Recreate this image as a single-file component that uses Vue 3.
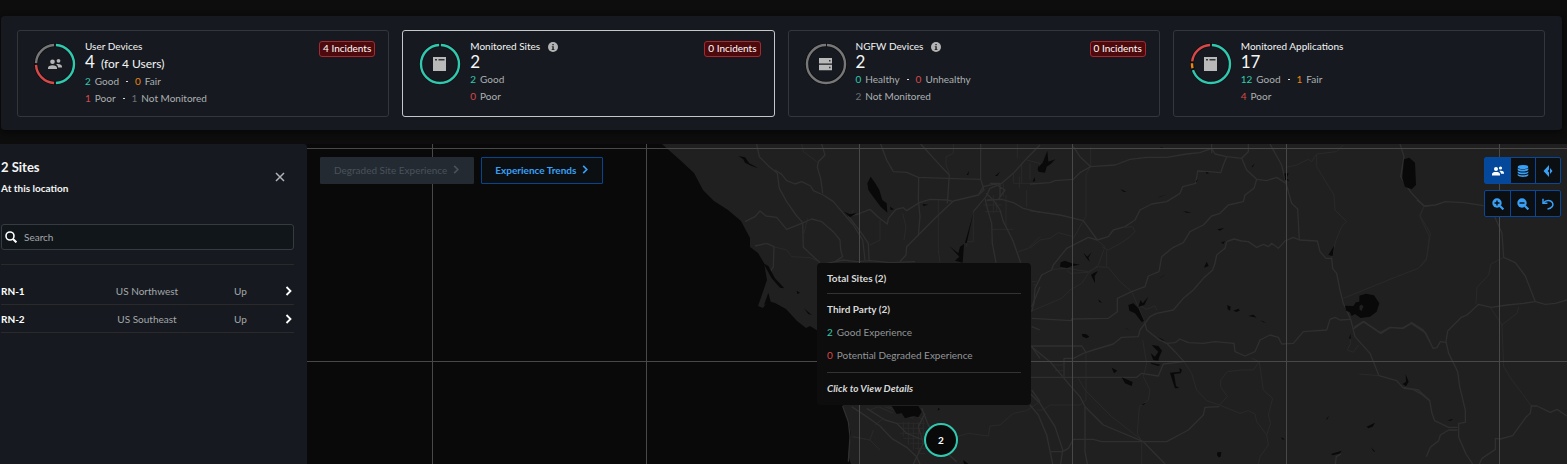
<script setup>
import { ref } from 'vue'

const teal = '#30c9b0'
const red = '#d94848'
const orange = '#ee8511'
const gray = '#777777'

const cards = [
  {
    title: 'User Devices', value: '4', note: '(for 4 Users)', incidents: '4 Incidents', icon: 'users',
    arcs: [[0, 50, teal], [50, 25, red], [75, 25, gray]],
    rows: [
      [{ n: 2, label: 'Good', tone: 'good' }, { n: 0, label: 'Fair', tone: 'fair' }],
      [{ n: 1, label: 'Poor', tone: 'poor' }, { n: 1, label: 'Not Monitored', tone: 'none' }]
    ]
  },
  {
    title: 'Monitored Sites', value: '2', info: true, incidents: '0 Incidents', icon: 'window', active: true,
    arcs: [[0, 100, teal]],
    rows: [[{ n: 2, label: 'Good', tone: 'good' }], [{ n: 0, label: 'Poor', tone: 'poor' }]]
  },
  {
    title: 'NGFW Devices', value: '2', info: true, incidents: '0 Incidents', icon: 'server',
    arcs: [[0, 102, gray]],
    rows: [
      [{ n: 0, label: 'Healthy', tone: 'good' }, { n: 0, label: 'Unhealthy', tone: 'poor' }],
      [{ n: 2, label: 'Not Monitored', tone: 'none' }]
    ]
  },
  {
    title: 'Monitored Applications', value: '17', icon: 'window',
    arcs: [[0, 70.6, teal], [70.6, 5.9, orange], [76.5, 23.5, red]],
    rows: [
      [{ n: 12, label: 'Good', tone: 'good' }, { n: 1, label: 'Fair', tone: 'fair' }],
      [{ n: 4, label: 'Poor', tone: 'poor' }]
    ]
  }
]

const sites = [
  { name: 'RN-1', region: 'US Northwest', status: 'Up' },
  { name: 'RN-2', region: 'US Southeast', status: 'Up' }
]
const query = ref('')

const westRoads = [
  'M350 12L358 50L388 80L412 100L418 145L440 185L468 225L488 248L490 322L540 368',
  'M405 90L425 103L440 122L465 132L485 125L512 138L520 152L550 165L580 185L610 220L640 255L668 300L675 360',
  'M545 12L555 45L535 65L532 82L542 115L548 160',
  'M722 12L740 60L760 95L800 97L835 112L920 115L1022 118',
  'M842 12L895 70L928 105L922 190',
  'M836 110L835 180L840 230L835 288',
  'M1022 12V118L1032 150L1015 165L940 183L885 235L835 285L800 320L798 345L780 365',
  'M940 185L922 180L870 178L838 188L800 212L790 203L768 208L745 235L742 252L715 232L690 208L655 222L625 228',
  'M625 228L665 280L685 310L687 360',
  'M1200 15L1165 50L1120 100L1085 130L1050 145L1038 170L1000 215',
  'M1038 160L1060 180L1080 210L1090 245L1118 300L1142 368',
  'M1035 175L1042 205L1055 250L1057 310L1068 368',
  'M1040 180L1085 178L1120 188L1150 205L1200 217',
  'M1050 130H1080V175M1015 165L1030 140L1065 132L1095 150L1075 178L1040 182',
  'M315 245L345 230L360 213L378 228L410 232L440 268L485 250L515 237L545 245L580 275L600 300L602 330L608 350L585 365',
  'M345 318L380 310L402 320L400 380L388 400',
  'M560 370L610 360L650 365L690 362L750 368L825 365',
  'M608 798L625 845L630 890L625 965',
  'M635 800L680 830L720 858L755 895L800 922L830 950L840 972',
  'M680 805L735 840L770 850L800 880L850 900',
  'M845 805L865 855L890 890L900 920L950 965',
  'M820 972L850 910L835 860L855 820',
  'M1175 560L1200 570M1175 620L1200 655M1175 750L1200 785M1175 500L1200 440'
]
const westMinor = [
  'M485 12L490 35L530 65M940 12V40L918 50V75L928 100M1132 12V55M1160 60L1200 70V95',
  'M503 235L492 280M400 320L440 330L455 350L510 353L540 365M788 220L798 260L792 300',
  'M895 180V330L900 368M1098 165V265M1200 290L1165 325L1135 335',
  'M1030 195H1085M1035 215H1085M1060 165V220M1070 185V215M1000 215V305H980V320M1055 268H1120',
  'M1120 100V130H1190M1145 70V130M1090 130V170M1138 110V145M1160 150V200M1170 70V120',
  'M630 230L640 210M720 240V300L690 315',
  'M770 850H855M785 865H850M780 880H855M790 895H855M810 910H855M825 925H860M835 940H855',
  'M790 845V890M805 845V915M820 848V930M835 845V940M850 840V915',
  'M690 810L715 800L760 820M730 835L705 855M700 870L690 900L635 890',
  'M950 890L985 880L1045 888L1050 858L1080 855L1120 820L1160 812L1200 785',
  'M640 890L690 900L720 930M900 940L945 910',
  'M735 800L820 835M745 800L825 828M755 800L850 838'
]
const eastRoads = [
  'M0 132L60 128L75 122L130 118L150 98L182 80L255 75L300 58L350 52L410 52L470 42L510 38L545 25L555 42L590 50L635 55L655 35V12',
  'M182 80L150 50L130 20M545 12V40M590 50L580 75L572 98L538 95L503 93L497 130L458 140L450 160L410 185L365 192L330 210L315 240L285 260L250 270L235 290L202 300L160 242L90 225L0 212',
  'M202 300L175 292L110 325L70 375L65 390L35 405L15 445L12 490L5 515',
  'M635 55L650 90L680 118L672 145L645 165L640 185L595 195L570 220L545 228L520 255L480 275L460 308L430 322L395 350L387 395L355 408L345 440L305 455L262 475V515L235 535L125 537L125 542L5 535',
  'M680 118L710 122L740 112L768 130M720 12L755 75L768 130L785 190L803 207L808 300',
  'M345 550L350 570L385 598L410 610L435 635L462 665L400 672L385 708L335 700L320 712H0',
  'M590 305L612 297L635 303L655 305L680 322L700 313L715 320L725 310L745 325L765 303L790 292L808 300L862 303L870 335L888 355L905 355L908 385L920 400L930 450L940 490L962 538L975 590L1020 640L1047 707L1100 722L1118 742L1165 750L1200 782',
  'M590 305L585 325L560 345L555 370L548 390L520 415L490 450L460 475L430 510L380 520L360 530L345 550L330 570L325 590L275 592L250 612L230 618L190 630L160 640L130 655L102 655V710',
  'M410 610L435 608L450 597L475 608L520 610L555 605L612 610L615 635L645 648L675 635L690 600L720 585L745 592L755 612L790 610L820 575L890 570L900 538L915 532L930 540L962 538',
  'M972 562L1000 545L1050 578L1080 562L1120 565L1145 548L1180 570L1200 605',
  'M0 618H155L168 637M5 620L60 665L125 742L150 770L165 800L220 855L340 905L405 972',
  'M0 760L30 790L75 860L90 905L100 935M0 795L25 825L50 885L68 972',
  'M165 800V935L172 972M62 935H98L115 925L130 898H190L215 905H410L475 870L520 825L525 802L568 800',
  'M92 972L98 930M1110 12L1122 50L1112 110L1145 160L1182 198L1200 197'
]
const eastMinor = [
  'M182 20V80L168 102V230L160 242L130 295M215 320L235 330L275 308L300 290L315 275L308 260L285 262',
  'M70 388L110 385L175 395L205 380L235 382L270 425L305 455L325 500L345 550',
  'M195 295L225 320L205 375L175 400L155 430L120 450L95 475L0 515M230 330V380M110 390L120 400L175 397',
  'M10 435H20M5 425L20 425M70 675H100M75 692H100M20 810H40',
  'M768 82L800 75L835 58L845 65L860 42L920 35L940 15M860 45V80L912 165L915 210L950 245L935 260L918 300L905 355',
  'M940 475L1100 410L1165 385L1190 355L1198 290L1170 230L1182 198',
  'M462 665L485 700L500 750L530 782L568 795L592 770L572 740V720L592 695L635 690L670 690L688 665L665 655M688 665L700 750L728 775L715 825L722 850L710 885L680 845L675 822L655 812L630 820L568 795M710 885L715 915L690 950L685 972',
  'M338 600L350 670L340 710L360 750L355 780L328 800L322 880L335 905V972M145 715L165 750L245 830L335 900M168 640V780L150 795H60L40 810M325 495L350 508L375 497L380 510',
  'M988 702L1047 707M960 590L962 610L952 630L970 637L985 615M0 325L30 300L60 295L85 278L130 290'
]
const farRoads = [
  'M450 0L472 18L505 15L535 5L590 8L650 17M683 50L705 100L710 172L745 188L775 228L805 305L770 310L720 315L672 322L635 313L600 345L583 352L542 393L537 425L545 460L572 515L578 560L595 630V667L575 670V712L597 762L617 792',
  'M805 305L835 313L865 310L900 300M258 388L290 365L342 400L370 382L405 385L433 370L475 398L498 445L510 443L520 425L537 427',
  'M410 565L438 568L460 580L488 602L495 640L503 662L545 682H572M572 690L545 690L520 705L515 722L490 742L478 770',
  'M637 792L645 775L685 748V715L700 717L737 707L778 650L790 640L793 618H810L850 637L870 628L900 648M205 792L208 770L222 762'
]
const farMinor = [
  'M472 18L458 45L490 100L478 180L460 200',
  'M710 172L672 192L665 225L630 262L627 312M670 322L705 375L750 340L755 320M705 375L710 500L735 540L765 580L793 618'
]
</script>

<template>
  <div class="page">
    <section class="summary">
      <article v-for="card in cards" :key="card.title" class="card" :class="{ active: card.active }">
        <svg class="ring" viewBox="0 0 42 42" aria-hidden="true">
          <circle cx="21" cy="21" r="19" fill="none" stroke="#0d0f11" stroke-width="4" />
          <circle
            v-for="(arc, i) in card.arcs" :key="i" cx="21" cy="21" r="19" fill="none"
            :stroke="arc[2]" stroke-width="2.4" pathLength="100"
            :stroke-dasharray="`${arc[1] - 1.6} 200`" :stroke-dashoffset="-(arc[0] + 0.8)"
            transform="rotate(-90 21 21)"
          />
          <g v-if="card.icon === 'users'" fill="#b4b4b4">
            <circle cx="18.5" cy="18.8" r="2.3" />
            <circle cx="24.5" cy="17.8" r="1.9" />
            <path d="M14 26v-1c0-2 2-2.8 4.5-2.8S23 23 23 25v1zM22 21.2c3-.7 6 .2 6 2.5v.7h-4c0-1.600-.8-2.500-2-3.200z" />
          </g>
          <g v-else-if="card.icon === 'window'">
            <path fill="#b9b9b9" d="M14 14h13v14H14z" />
            <path fill="#34373b" d="M16 16h2v1.500h-2zM19.500 16h6v1.500h-6z" />
          </g>
          <g v-else>
            <path fill="#b9b9b9" d="M14 15h13v5.500H14zM14 21.800h13v5.500H14z" />
            <path fill="#34373b" d="M24 17h1.500v1.500H24zM24 23.800h1.500v1.500H24z" />
          </g>
        </svg>
        <div class="info">
          <h2>
            {{ card.title }}
            <svg v-if="card.info" class="tip" viewBox="0 0 10 10" aria-hidden="true">
              <circle cx="5" cy="5" r="5" fill="#b4b4b4" />
              <path d="M4.300 2h1.500v1.300H4.300zM3.800 4.200h2v2.700h.6v1H3.700v-1h.6V5.100h-.5z" fill="#252a30" />
            </svg>
          </h2>
          <p class="value" :class="{ noted: card.note }">{{ card.value }}<span v-if="card.note">{{ card.note }}</span></p>
          <p v-for="(row, r) in card.rows" :key="r" class="stats">
            <template v-for="(s, i) in row" :key="s.label">
              <i v-if="i" class="dot"></i>
              <span><b :class="s.tone">{{ s.n }}</b>{{ s.label }}</span>
            </template>
          </p>
        </div>
        <span v-if="card.incidents" class="badge">{{ card.incidents }}</span>
      </article>
    </section>

    <main class="body">
      <aside class="panel">
        <header>
          <div>
            <h1>2 Sites</h1>
            <p>At this location</p>
          </div>
          <button class="close" aria-label="Close">
            <svg viewBox="0 0 10 10"><path d="M1 1l8 8M9 1L1 9" fill="none" stroke="#b0b4b8" stroke-width="1.500" /></svg>
          </button>
        </header>
        <label class="search">
          <svg viewBox="0 0 12 12" aria-hidden="true">
            <circle cx="5" cy="5" r="4" fill="none" stroke="#fff" stroke-width="1.600" />
            <path d="M8 8l3.400 3.400" stroke="#fff" stroke-width="2" />
          </svg>
          <input v-model="query" type="text" placeholder="Search" aria-label="Search" />
        </label>
        <table>
          <tbody>
            <tr v-for="site in sites" :key="site.name">
              <th scope="row">{{ site.name }}</th>
              <td class="region">{{ site.region }}</td>
              <td class="status">{{ site.status }}</td>
              <td class="go">
                <button :aria-label="`Open ${site.name}`">
                  <svg viewBox="0 0 6 10"><path d="M1 1l4 4-4 4" fill="none" stroke="#fff" stroke-width="1.800" /></svg>
                </button>
              </td>
            </tr>
          </tbody>
        </table>
      </aside>

      <section class="map">
        <svg class="terrain" viewBox="307 144 1260 320" preserveAspectRatio="xMinYMin slice" aria-hidden="true">
          <path
            fill="#202020"
            d="M662 144L680 160L694 173L703 190L714 201L728 210L741 221L750 238L750 247L758 253L764 263L767 280L758 306L763 308L768 301L775 303L786 309L797 321L806 328L810 326L818 331L830 370L843 406L848 420L851 435L848 455L851 464H1567V144Z"
          />
          <g fill="none" stroke-linejoin="round">
            <g transform="translate(640 140) scale(.33333)">
              <path v-for="d in westMinor" :key="d" :d="d" class="minor" />
              <path v-for="d in westRoads" :key="d" :d="d" class="road" />
            </g>
            <g transform="translate(1030 140) scale(.33333)">
              <path v-for="d in eastMinor" :key="d" :d="d" class="minor" />
              <path v-for="d in eastRoads" :key="d" :d="d" class="road" />
            </g>
            <g transform="translate(1267 200) scale(.33333)">
              <path v-for="d in farMinor" :key="d" :d="d" class="minor" />
              <path v-for="d in farRoads" :key="d" :d="d" class="road" />
            </g>
          </g>
          <g fill="#090909">
            <g transform="translate(640 140) scale(.33333)">
              <path d="M295 48L315 52L328 70L355 85L335 78L315 68L310 58ZM692 110L705 128L718 150L727 180L740 190L742 218L722 200L705 178L685 150L682 130ZM370 370L385 378L405 415L433 445L420 443L395 415ZM385 458L392 485L372 495ZM960 320L972 312L968 368L945 362L958 350L928 318L955 340ZM1000 220L980 310L975 308ZM755 798L770 822L785 820L795 835L820 828L835 832L845 815L835 798ZM612 215L630 232L650 220L628 222ZM750 200L762 208L752 210ZM848 192L865 194L850 198ZM470 452L480 458L472 462ZM492 505L515 525L505 522ZM895 803L900 808L893 812ZM970 960L985 972H972ZM1195 75L1200 95L1193 90ZM1065 108L1080 95L1072 108ZM980 105L987 93L985 105ZM1183 112L1186 122L1178 126Z" />
            </g>
            <g transform="translate(1030 140) scale(.33333)">
              <path d="M52 32L55 65L76 58L62 72L50 80L45 98L25 95L28 78L38 68ZM92 367L105 362L125 370L150 374L125 378L112 384L90 380ZM160 338L172 350L185 337L175 353L180 366L170 355ZM204 393L194 408L195 430L183 405L190 400ZM295 495L310 490L325 505L342 543L335 546L315 520L298 512ZM355 470L343 495L325 500L332 480L338 490ZM155 582L168 582L178 590L170 595L158 590ZM283 562L302 572L290 566ZM365 615L385 618L396 632L388 650L385 662L370 660L362 640L375 650L385 635ZM362 668L392 674L385 678L365 672ZM245 683L262 692L252 700ZM275 712L308 726L305 738L285 730ZM420 698L450 695L448 683L456 690L452 700L432 702L438 738L448 744L435 745L425 715ZM562 268L582 264L570 272ZM573 308L585 303L580 312ZM530 365L536 378L522 383ZM592 495L602 500L600 512L593 508ZM610 512L625 506L630 511L620 516ZM655 528L670 524L680 533L668 530ZM690 540L708 548L700 547ZM1122 58L1138 53L1155 68L1158 135L1145 148L1125 140L1117 115ZM912 318L908 348L895 345ZM945 497L970 498L978 487L988 485L988 467L1008 461L1032 466L1048 490L1040 515L1020 530L992 534L975 522L965 528L960 517L948 512ZM962 582V598L957 595ZM1127 703L1136 725L1128 739L1118 732L1128 725ZM1010 860L1035 848L1028 860L1015 865ZM903 942L935 932L930 940L908 946ZM1023 922L1036 935L1030 934ZM562 937L574 936L572 950L566 952L561 945ZM753 892L765 898L758 899ZM763 100L776 100L770 115L778 123L765 120ZM527 95L538 99L530 101ZM497 125L504 116L500 126ZM458 214L485 217L470 218ZM385 172L410 163L390 171ZM272 148L290 155L280 155ZM388 415L408 402L392 413ZM665 80L674 70L668 82ZM205 478L216 488L208 486ZM335 793L348 788L340 795ZM385 592L405 602L395 600ZM390 20L408 27H398ZM888 838L897 827L892 838Z" />
            </g>
            <path d="M1447.500 420.200L1453 419L1451 420.800Z" />
          </g>
          <path d="M1359.500 306l2-1.500 2 2-2 4.500-2-1.500z" fill="#202020" />
          <path d="M307 148.500H1567M307 361.500H1567M432.500 144V464M646.500 144V464M859.500 144V464M1072.500 144V464M1286.500 144V464M1499.500 144V464" stroke="#484848" />
        </svg>

        <div class="actions">
          <button class="action" disabled>
            Degraded Site Experience
            <svg viewBox="0 0 6 10"><path d="M1 1l4 4-4 4" fill="none" stroke="currentColor" stroke-width="1.800" /></svg>
          </button>
          <button class="action primary">
            Experience Trends
            <svg viewBox="0 0 6 10"><path d="M1 1l4 4-4 4" fill="none" stroke="currentColor" stroke-width="1.800" /></svg>
          </button>
        </div>

        <div class="tools">
          <div class="group">
            <button class="on" aria-label="Users">
              <svg viewBox="0 0 12 12" fill="#fff">
                <circle cx="4" cy="4" r="2" /><circle cx="8.500" cy="3" r="1.600" />
                <path d="M0 10.500V9.300C0 7.600 1.700 7 4 7s4 .6 4 2.300v1.200zM7.200 6c2.400-.5 4.800 0 4.800 2v.8H9C8.900 7.500 8.300 6.700 7.200 6z" />
              </svg>
            </button>
            <button aria-label="Data stores">
              <svg viewBox="0 0 12 12" fill="#3aa0f5">
                <ellipse cx="6" cy="2" rx="5.300" ry="2" />
                <path d="M.7 3.300C2 5 10 5 11.300 3.300v1.600C10 7 2 7 .7 4.900zM.7 6.200C2 8 10 8 11.300 6.200v1.500C10 9.800 2 9.800.7 7.700zM.7 9c1.300 1.700 9.300 1.700 10.600 0v1.200c-1.300 2.300-9.300 2.300-10.600 0z" />
              </svg>
            </button>
            <button aria-label="Directions">
              <svg viewBox="0 0 12 12" fill="#3aa0f5"><path d="M7 0v4.500L5.700 6 7 7.500V12L1.500 6zM8 3l2.500 3L8 9z" /></svg>
            </button>
          </div>
          <div class="group">
            <button aria-label="Zoom in">
              <svg viewBox="0 0 12 12">
                <circle cx="5" cy="5" r="4.700" fill="#3aa0f5" /><path d="M8 8l3.400 3.400" stroke="#3aa0f5" stroke-width="2.200" />
                <path d="M5 2.500v5M2.500 5h5" stroke="#0b0f12" stroke-width="1.400" />
              </svg>
            </button>
            <button aria-label="Zoom out">
              <svg viewBox="0 0 12 12">
                <circle cx="5" cy="5" r="4.700" fill="#3aa0f5" /><path d="M8 8l3.400 3.400" stroke="#3aa0f5" stroke-width="2.200" />
                <path d="M2.500 5h5" stroke="#0b0f12" stroke-width="1.400" />
              </svg>
            </button>
            <button aria-label="Reset">
              <svg viewBox="0 0 12 12" fill="none" stroke="#3aa0f5" stroke-width="1.500">
                <path d="M1 .8v4.400h4.400" /><path d="M1.300 5C4 1.800 8.500 1.800 10.300 4.500 12 7.500 9.500 10.800 5.500 11" />
              </svg>
            </button>
          </div>
        </div>

        <div class="popup">
          <h3>Total Sites (2)</h3>
          <div class="party">
            <h3>Third Party (2)</h3>
            <p><b class="good">2</b>Good Experience</p>
            <p><b class="poor">0</b>Potential Degraded Experience</p>
          </div>
          <em>Click to View Details</em>
        </div>
        <button class="pin">2</button>
      </section>
    </main>
  </div>
</template>

<style>
body {
  margin: 0;
  background: #0d0d0d;
}
</style>

<style scoped>
.page {
  box-sizing: border-box;
  display: flex;
  flex-direction: column;
  gap: 14px;
  min-height: 100vh;
  padding-top: 16px;
  font: 10px/16px Lato, "Liberation Sans", sans-serif;
  color: #f4f5f5;
}
h1, h2, h3, p { margin: 0; font-size: inherit; }
button { font: inherit; cursor: pointer; }
svg { display: block; }

.summary {
  display: grid;
  grid-template-columns: repeat(4, 1fr);
  gap: 13px;
  margin: 0 5px 0 1px;
  padding: 14px 17px 13px 16px;
  background: #161a20;
  border-radius: 4px;
  box-shadow: 0 2px 6px #060606;
}
.card {
  box-sizing: border-box;
  display: flex;
  align-items: flex-start;
  min-height: 87px;
  padding: 8px 13px 8px 16px;
  border: 1px solid #33363a;
  border-radius: 3px;
}
.card.active { border-color: #c4c6c8; }
.ring { width: 42px; height: 42px; margin: 4px 9px 0 0; }
.info { flex: 1; }
h2 { display: flex; align-items: center; gap: 8px; font-weight: 400; line-height: 15px; }
.tip { width: 10px; height: 10px; }
.value { display: flex; align-items: baseline; height: 17px; font-size: 17px; line-height: 16px; }
.value span { margin-left: 6px; font-size: 12px; }
.value.noted { height: 19px; }
.stats { display: flex; align-items: center; line-height: 17px; color: #adb0b2; }
.stats b, .popup b { margin-right: 4px; font-weight: 400; }
.dot { width: 2px; height: 1px; margin: 0 7px; background: #d8dadb; }
.good { color: #30c9b0; }
.fair { color: #ee8511; }
.poor { color: #d94848; }
.none { color: #6c7074; }
.badge {
  margin-top: 2px;
  padding: 0 3px 1px;
  line-height: 13px;
  color: #fff;
  background: #4d090c;
  border: 1px solid #a42a30;
  border-radius: 3px;
}

.body { display: flex; flex: 1; }
.panel {
  box-sizing: border-box;
  flex: 0 0 307px;
  padding: 13px 13px 0 1px;
  background: #161a20;
  border-top-right-radius: 4px;
}
.panel header { display: flex; align-items: center; justify-content: space-between; height: 39px; }
h1 { font-size: 13px; line-height: 18px; font-weight: 700; }
.panel header p { padding-top: 4px; font-weight: 700; }
.close { margin-right: 4px; padding: 5px; border: 0; background: none; }
.close svg { width: 10px; height: 10px; }
.search {
  box-sizing: border-box;
  display: flex;
  align-items: center;
  gap: 7px;
  height: 26px;
  margin-top: 28px;
  padding: 0 3px;
  background: #11161a;
  border: 1px solid #353b41;
  border-radius: 3px;
}
.search svg { width: 12px; height: 12px; }
.search input { flex: 1; min-width: 0; padding: 0 0 1px; border: 0; outline: 0; background: none; font: inherit; color: #fff; }
.search input::placeholder { color: #a4a8ab; opacity: 1; }
table {
  width: 100%;
  margin-top: 14px;
  padding-top: 12px;
  border-top: 1px solid #2a2a2a;
  border-spacing: 0;
  table-layout: fixed;
}
th, td { box-sizing: border-box; height: 28px; padding: 0; border-bottom: 1px solid #2a2a2a; color: #a4a8ab; }
th { width: 92px; text-align: left; color: #fff; font-weight: 700; }
.region { width: 108px; text-align: center; }
.status { text-align: center; }
.go { width: 14px; }
.go button { display: block; padding: 4px 5px; border: 0; background: none; }
.go svg { width: 7px; height: 10px; }

.map { position: relative; flex: 1; min-width: 0; min-height: 320px; overflow: hidden; background: #090909; }
.terrain { position: absolute; width: 100%; height: 100%; }
.road { stroke: #2f2f2f; stroke-width: 4; }
.minor { stroke: #292929; stroke-width: 3; }
.actions { position: absolute; top: 13px; left: 13px; display: flex; gap: 7px; }
.action {
  display: flex;
  align-items: center;
  gap: 6px;
  height: 27px;
  padding: 0 14px 2px 13px;
  color: #49525b;
  background: #242a31;
  border: 1px solid #242a31;
  border-radius: 1px;
}
.action.primary { color: #3aa0f5; background: #0b0f12; border-color: #08458f; font-weight: 700; }
.action svg { width: 6px; height: 9px; }
.tools { position: absolute; top: 13px; right: 6px; display: grid; gap: 6px; }
.group { display: flex; background: #0b0f12; border: 1px solid #07489a; border-radius: 2px; }
.group button { display: grid; place-items: center; width: 25px; height: 25px; padding: 0; border: 0; background: none; }
.group button + button { border-left: 1px solid #07489a; }
.group .on { background: #04489c; }
.group svg { width: 12px; height: 12px; }

.popup {
  position: absolute;
  box-sizing: border-box;
  top: 119px;
  left: 510px;
  width: 214px;
  padding: 7px 10px 9px;
  background: #0d0d0d;
  border-radius: 4px;
}
h3 { font-weight: 700; color: #d8d9da; }
.party { margin: 7px 0; padding: 7px 0 9px; border: solid #333; border-width: 1px 0; }
.party p { margin-top: 7px; color: #929699; }
.popup em { display: block; font-weight: 700; color: #d8d9da; }
.pin {
  position: absolute;
  top: 279px;
  left: 617px;
  width: 34px;
  height: 34px;
  padding: 0;
  border: 2px solid #30c9b0;
  border-radius: 50%;
  background: #090909;
  color: #fff;
  font-weight: 700;
}
</style>
